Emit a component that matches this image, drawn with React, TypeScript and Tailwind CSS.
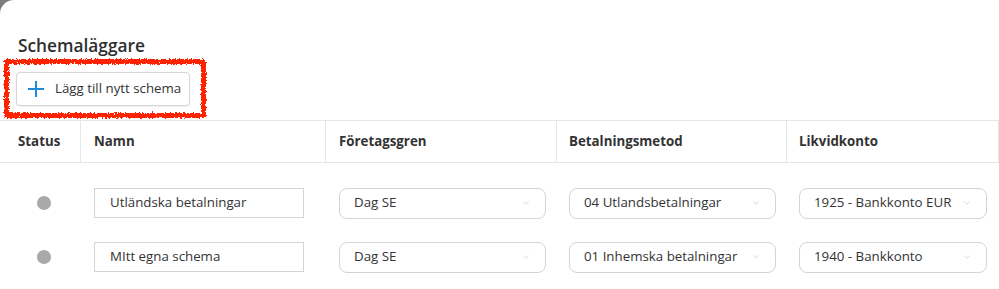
import { ChevronDown } from 'lucide-react';

interface ScheduleRow {
  id: number;
  name: string;
  branch: string;
  method: string;
  account: string;
}

const rows: ScheduleRow[] = [
  { id: 1, name: 'Utländska betalningar', branch: 'Dag SE', method: '04 Utlandsbetalningar', account: '1925 - Bankkonto EUR' },
  { id: 2, name: 'MItt egna schema', branch: 'Dag SE', method: '01 Inhemska betalningar', account: '1940 - Bankkonto' },
];

const columns = ['Status', 'Namn', 'Företagsgren', 'Betalningsmetod', 'Likvidkonto'];

function SelectBox({ value, width }: { value: string; width: string }) {
  return (
    <div
      className={`${width} h-[31px] flex items-center justify-between pl-[14px] pr-[14px] border border-[#d4d4d4] rounded-[8px] bg-white text-[13.3px] text-[#333] whitespace-nowrap`}
    >
      <span>{value}</span>
      <ChevronDown className="text-[#c2c2c2]" size={10} strokeWidth={1.5} />
    </div>
  );
}

export default function App() {
  return (
    <div className="w-[999px] h-[289px] bg-[#7d7d7d] overflow-hidden" style={{ fontFamily: '"Open Sans", "Noto Sans", sans-serif' }}>
      <svg width="0" height="0" className="absolute">
        <filter id="rough">
          <feTurbulence type="fractalNoise" baseFrequency="0.6" numOctaves="3" result="noise" />
          <feDisplacementMap in="SourceGraphic" in2="noise" scale="5" />
        </filter>
      </svg>

      <div className="h-full bg-white rounded-tl-[14px] text-[#333]">
        <h2 className="pt-[34px] pl-[18px] text-[17.3px] leading-[24px] font-semibold text-[#2e2e2e]">Schemaläggare</h2>

        <div className="relative mt-[1px] ml-[4px] w-[202px] h-[59px] flex items-center pl-[12px]">
          <div className="absolute inset-0 border-[5px] border-[#ff2200] [filter:url(#rough)]"></div>
          <button className="h-[34px] w-[174px] flex items-center gap-[10px] pl-[10px] border border-[#d6d6d6] rounded-[4px] bg-white shadow-[0_1px_2px_rgba(0,0,0,0.08)] text-[13.3px] text-[#333] whitespace-nowrap">
            <svg width="18" height="18" viewBox="0 0 18 18">
              <path d="M9 1v16M1 9h16" stroke="#1f8ad6" strokeWidth="2" />
            </svg>
            <span>Lägg till nytt schema</span>
          </button>
        </div>

        <div className="mt-[2px] w-[999px]">
          <div className="grid grid-cols-[81px_245px_231px_230px_212px] h-[43px] border-y border-[#e6e6e6]">
            {columns.map((col, i) => (
              <div
                key={col}
                className={`flex items-center pt-[1px] border-r border-[#e6e6e6] text-[13.3px] font-bold text-[#333] ${i === 0 ? 'pl-[18px]' : i < 3 ? 'pl-[13px]' : 'pl-[12px]'}`}
              >
                {col}
              </div>
            ))}
          </div>

          <div className="pt-[13px]">
            {rows.map((row) => (
              <div key={row.id} className="grid grid-cols-[81px_245px_231px_230px_212px] h-[54px] items-center">
                <div className="pl-[37px]">
                  <div className="w-[14px] h-[14px] rounded-full bg-[#a9a9a9]"></div>
                </div>
                <div className="pl-[13px]">
                  <div className="w-[210px] h-[30px] flex items-center pl-[15px] border border-[#d4d4d4] text-[13.3px] text-[#333]">
                    {row.name}
                  </div>
                </div>
                <div className="pl-[13px]">
                  <SelectBox value={row.branch} width="w-[207px]" />
                </div>
                <div className="pl-[12px]">
                  <SelectBox value={row.method} width="w-[207px]" />
                </div>
                <div className="pl-[12px]">
                  <SelectBox value={row.account} width="w-[188px]" />
                </div>
              </div>
            ))}
          </div>
        </div>
      </div>
    </div>
  );
}
